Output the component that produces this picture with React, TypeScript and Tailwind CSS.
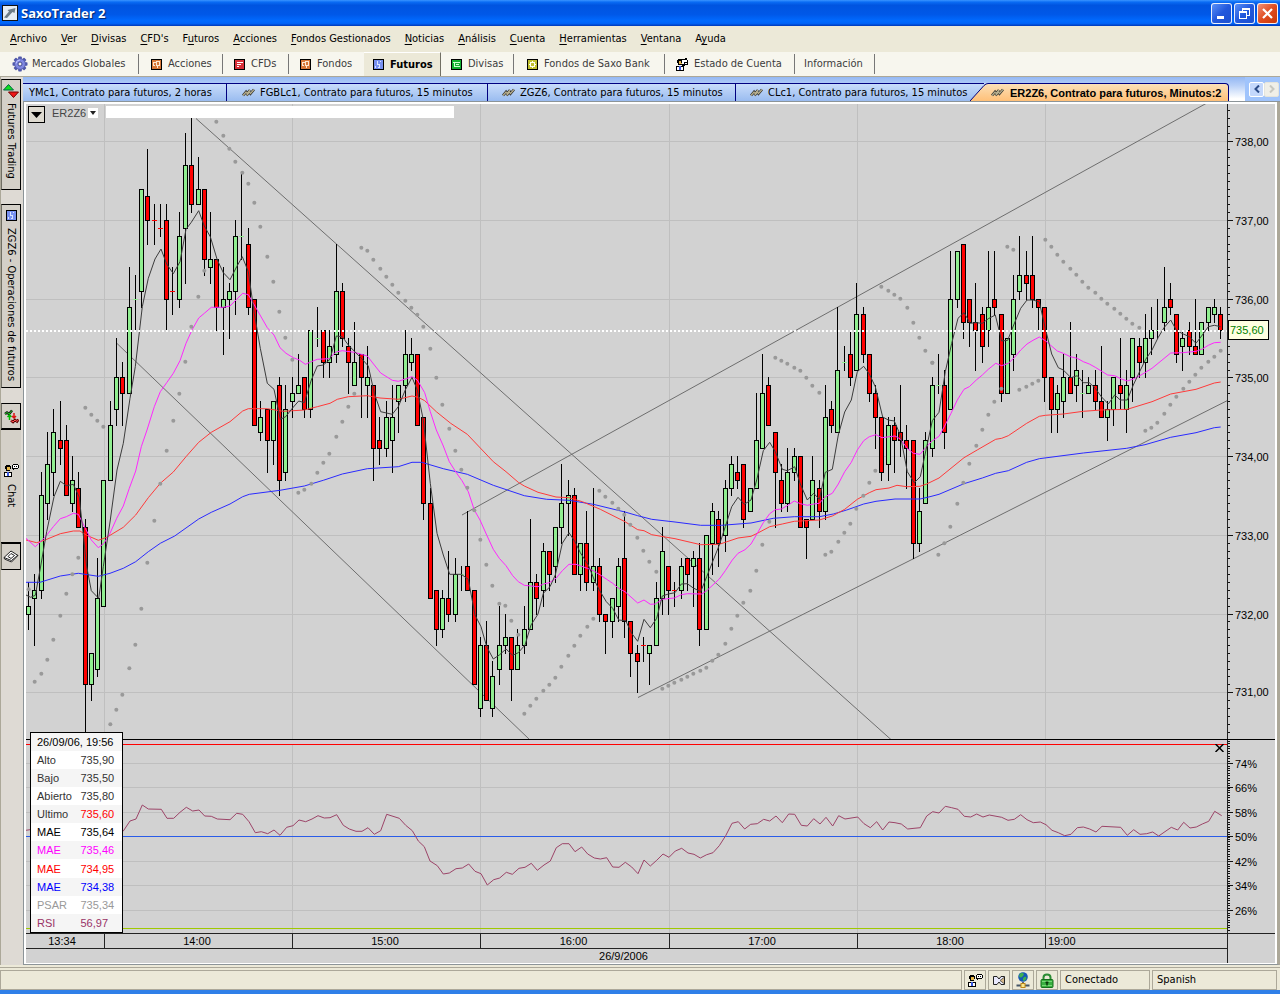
import React from "react";

/* ---------- Market data ---------- */

// high, low, body top, body bottom in ticks of 0.1 above 730.0; g = rising, r = falling
const CANDLES = `24 18 21 20 g|25 16 23 22 g|38 22 35 23 g|43 32 39 34 g|46 35 43 38 g|47 39 42 41 r|44 35 42 35 r|40 33 37 34 g|38 31 36 31 r|32 4 31 11 r
15 9 15 11 g|27 12 22 13 g|37 21 37 21 g|47 37 44 37 g|55 44 50 46 g|52 44 50 48 r|64 48 59 48 g|63 56 60 60 g|74 59 74 61 g|79 67 73 70 r
72 67 70 70 r|72 68 69 69 r|72 56 70 60 r|64 58 61 61 r|71 59 68 60 g|81 62 77 69 g|83 71 77 72 r|78 72 74 72 g|74 63 74 65 r|71 62 65 64 g
65 56 65 59 r|64 53 60 59 g|62 55 61 60 g|70 58 68 61 g|76 65 68 68 g|69 58 67 59 r|60 44 60 44 r|47 42 45 43 g|46 38 46 42 r|47 39 47 42 g
50 35 49 37 r|49 37 46 38 g|50 45 48 47 g|53 48 49 48 g|50 45 50 46 r|56 45 56 46 g|59 54 55 55 g|56 50 56 52 r|56 50 54 52 g|67 52 61 53 g
62 54 61 55 r|55 48 54 52 r|57 49 52 49 g|53 45 53 50 r|54 45 50 49 g|49 37 49 41 r|45 39 42 41 r|47 40 45 41 g|49 38 45 42 g|49 43 49 47 g
56 47 53 49 g|55 51 53 52 g|53 44 53 44 r|45 32 45 34 r|36 22 34 22 r|23 16 23 18 r|23 17 22 18 g|28 19 22 20 r|27 19 25 20 g|26 23 25 25 g
33 23 26 23 r|23 11 23 11 r|17 7 16 8 g|19 9 16 9 r|14 7 12 8 g|21 11 16 13 g|20 15 17 16 g|17 9 17 13 r|18 13 16 13 g|21 15 18 16 g
32 18 24 18 g|25 20 24 22 r|29 21 28 23 g|28 23 28 25 r|31 24 31 26 g|39 29 34 31 g|37 30 35 34 g|36 25 35 25 r|29 23 29 25 g|33 23 29 24 r
36 23 26 24 g|27 19 26 20 r|20 15 20 19 r|22 17 22 19 g|27 19 26 21 g|33 17 27 19 r|19 12 19 15 r|16 10 15 14 r|17 14 16 16 r|16 11 16 15 g
24 16 22 16 g|31 20 28 22 g|26 20 26 23 r|24 21 23 23 r|27 22 26 23 g|27 23 27 25 r|28 21 27 26 g|29 16 27 18 r|30 18 30 18 g|34 25 33 29 g
33 26 32 29 r|37 28 36 30 g|40 35 39 36 g|40 36 38 37 r|39 31 39 32 r|36 33 36 33 g|48 36 42 36 g|53 41 48 41 g|50 44 49 44 r|43 31 43 38 r
39 33 37 34 r|41 33 38 34 g|41 37 40 38 g|40 31 40 31 r|32 27 32 31 r|40 32 37 32 g|37 31 36 33 r|49 32 45 33 g|47 43 46 44 r|59 43 51 43 g
54 51 52 52 g|56 49 53 50 r|62 51 58 51 g|59 52 58 53 r|53 47 53 48 r|49 41 48 45 r|45 37 45 38 r|45 37 44 39 g|45 38 44 42 r|49 40 43 42 r
44 36 42 41 r|42 27 42 29 r|36 28 33 29 g|43 34 42 34 g|50 40 49 41 g|53 48 49 49 g|51 41 49 43 r|66 46 60 46 g|66 59 66 60 g|67 55 67 57 r
60 54 60 57 r|62 51 57 56 r|59 52 58 54 r|66 54 59 56 g|66 58 60 59 r|58 47 58 48 r|55 48 55 48 g|63 51 60 53 g|68 60 63 61 g|66 60 63 62 r
68 59 63 60 r|60 56 60 59 r|59 47 59 50 r|50 43 50 46 r|49 43 48 46 g|53 45 50 47 g|57 48 50 48 r|53 47 51 49 g|51 45 48 48 g|50 48 49 48 g
51 46 49 47 r|54 45 47 45 r|47 42 46 45 g|50 44 50 46 g|55 46 49 48 r|51 43 49 46 g|55 47 55 50 g|55 50 54 52 r|58 50 55 52 g|59 53 56 55 g
60 55 56 56 g|64 56 59 57 g|62 58 60 59 r|58 52 58 53 r|56 51 55 54 g|57 53 56 54 r|60 53 54 53 r|57 53 57 53 g|59 56 59 57 g|60 57 59 58 g
59 55 58 56 r`
  .split(/[|\n]/)
  .map((row) => {
    const [h, l, t, b, c] = row.trim().split(" ");
    return { high: +h, low: +l, top: +t, bottom: +b, up: c === "g" };
  });

// Recorded curves: each tile has an origin, and its points are in thirds of a unit from it.
type Tile = [number, number, string];
const toPoints = (tiles: Tile[]): [number, number][] =>
  tiles.flatMap(([ox, oy, pts]) =>
    pts.split(" ").map((p) => {
      const [x, y] = p.split(",").map(Number);
      return [ox + x / 3, oy + y / 3] as [number, number];
    })
  );
const toLine = (tiles: Tile[]) =>
  toPoints(tiles)
    .map(([x, y]) => `${x.toFixed(1)},${y.toFixed(1)}`)
    .join(" ");

const FAST = toLine([
  [20, 400, "18,585 32,592 46,586 60,510 80,395 102,290 121,244 139,257 160,253 178,292 200,500 214,572 236,595 250,500 271,360 291,210 310,130"],
  [20, 100, "330,895 346,800 367,620 385,535 405,477 423,447 440,492 460,521 480,485 498,388 514,367 536,332 553,378 571,410 592,480 610,518 630,539 650,500 667,470 685,515 703,640 721,745 742,850 762,868 781,958 797,950 817,925 836,903 853,908 874,840 892,798 910,795 930,778 949,708"],
  [330, 230, "37,320 55,345 94,385 115,408 133,490 152,545 187,553 205,530 226,480 246,442 262,480 280,570 301,760 321,910 340,975 359,1033 394,1033 415,1048 435,1155 453,1190 470,1250 490,1287 508,1275 528,1257 548,1276 565,1268 585,1245 603,1185 624,1152 640,1090 660,1070 676,1035 697,940 717,908 735,935 751,968 775,1005 793,1050 808,1080 829,1115 848,1135 866,1170 887,1172 905,1210 923,1234 942,1168"],
  [640, 280, "31,1043 50,1015 67,948 85,942 105,938 124,912 142,911 160,924 182,935 200,890 220,840 238,795 256,740 275,680 294,652 313,673 333,660 350,600 370,512 389,487 406,515 427,568 442,572 464,560 481,612 502,660 521,640 538,658 556,577 577,568 595,465 614,396 634,360 652,275 671,259 688,282 706,320 728,411 745,420 763,423 781,465 802,575 823,608 841,590 858,510 877,422 897,397"],
  [900, 200, "136,515 155,430 174,355 192,338 211,370 228,368 247,370 265,356 286,345 305,423 323,421 341,375 362,325 381,300 399,300 418,306 436,385 455,462 475,503 490,510 513,533 532,527 550,548 568,548 586,565 604,590 625,612 644,585 661,600 682,600 700,555 718,517 737,478 756,450 775,412 793,382 812,360 830,392 850,402 868,410 888,430 907,405 925,380 943,376 962,380"],
]);

const MEDIUM = toLine([
  [20, 400, "18,415 46,440 75,412 100,380 121,356 139,350 160,340 175,343 196,385 214,420 235,443 252,430 270,400 290,355 310,318 328,265 347,213 364,140 381,90"],
  [20, 100, "403,920 421,875 440,848 460,820 480,782 498,730 516,690 536,654 553,640 574,622 610,622 630,618 650,598 668,580 685,584 703,615 742,683 762,705 780,743 798,760 820,773 838,780 856,793 874,785 892,778 928,776 945,758"],
  [330, 230, "19,366 37,362 73,367 112,378 133,405 152,429 187,451 205,454 226,447 246,440 262,450 284,488 301,545 319,600 340,648 358,695 379,728 396,752 415,785 433,840 450,870 470,915 490,958 508,985 528,1007 548,1037 565,1055 583,1066 624,1070 640,1062 658,1058 678,1045 697,1022 717,1003 738,1003 772,1015 790,1022 811,1035 848,1060 866,1075 885,1085 923,1119 942,1110"],
  [640, 280, "31,973 46,972 67,958 103,954 124,944 142,941 185,942 200,932 238,897 256,872 277,840 294,820 315,809 333,792 352,760 370,728 389,701 406,689 424,687 445,675 463,663 481,671 502,676 521,672 538,670 556,650 577,640 595,612 614,575 634,547 652,510 671,482 688,470 708,464 726,473 765,468 781,477 802,505 820,520 840,523 858,502 877,482 897,469"],
  [900, 200, "133,680 153,640 172,600 192,568 208,560 229,540 247,525 265,508 287,490 305,497 325,490 343,473 362,450 381,432 399,421 418,411 436,422 472,453 490,460 511,470 532,475 550,485 568,492 586,502 623,525 644,527 664,537 682,543 700,537 718,528 738,516 756,505 812,459 848,458 888,454 907,447 925,436 943,428 962,427"],
]);

const SLOW = toLine([
  [20, 400, "18,420 50,428 75,420 121,401 160,393 180,393 200,406 235,421 260,412 310,382 347,345 385,293 421,250 460,216 498,170 536,127 574,97 630,65 668,33 685,26 742,26 790,34 853,30 892,20 930,10"],
  [330, 230, "22,508 55,500 112,497 150,504 205,508 246,498 265,502 284,512 319,545 362,580 412,613 490,695 528,725 565,757 583,768 624,787 678,801 717,803 757,815 811,838 885,875 923,899 942,902"],
  [640, 280, "35,764 105,776 182,794 238,793 294,774 333,769 352,760 389,740 427,732 463,724 538,720 577,708 614,688 652,658 688,638 708,629 747,624 771,616 800,620 840,619 860,612"],
  [900, 200, "117,834 192,773 233,749 287,718 305,715 325,707 380,670 418,649 436,646 490,642 550,634 604,630 682,628 756,605 812,582 888,568 943,549 962,546"],
]);

const LONG = toLine([
  [20, 400, "18,547 60,547 121,528 175,520 235,529 270,520 310,505 347,485 385,455 421,430 464,408 536,357 574,337 630,312 668,290 688,283 780,271 853,258 910,241"],
  [330, 230, "37,732 112,716 205,710 246,697 275,697 340,716 412,733 490,766 583,797 650,808 717,811 790,823 885,846 923,857"],
  [640, 280, "35,718 105,726 182,736 245,736 333,729 400,715 463,710 538,710 580,702 620,690 671,672 708,664 765,657 840,657 870,650"],
  [900, 200, "117,883 192,851 247,834 287,820 325,812 380,787 418,776 550,759 680,745 735,734 812,712 888,698 943,683 962,681"],
]);

const SAR = toPoints([
  [20, 400, "26,568 44,845 64,821 82,779 100,719 121,647 139,581 157,523 175,473 271,973 289,929 307,884 328,805 346,734 364,626 382,488 403,362 421,251 440,152 460,62 835,278 853,269 874,251 892,218 910,188 928,161 949,110"],
  [20, 100, "196,923 214,944 232,962 250,980 478,881 496,785 514,680 535,590 553,512 589,65 610,107 628,146 646,185 667,218 685,251 703,308 721,380 742,470 760,545 778,635 796,713 817,779"],
  [330, 230, "37,575 55,530 73,491 94,53 112,62 130,89 151,116 169,140 187,164 205,188 226,212 244,233 262,254 280,290 301,356 319,443 337,524 358,596 376,662 394,719 412,773 433,841 451,929 469,1004 487,1067 508,1121 526,1127 544,1172 565,1214 583,1451 601,1427 619,1406 640,1382 658,1364 676,1343 694,1310 715,1277 733,1247 751,1217 772,1190 790,1166 808,782 826,800 847,818 865,836 883,854 901,884 922,923"],
  [640, 280, "10,812 28,845 49,875 67,1226 85,1217 103,1208 124,1199 142,1190 160,1181 181,1172 199,1163 217,1142 235,1124 256,1091 274,1046 292,1007 310,968 331,932 349,872 367,794 388,725 406,233 424,242 442,251 463,263 481,272 499,293 517,317 538,338 556,824 574,815 595,785 613,758 631,731 649,686 670,647 688,608 706,572 724,20 745,32 763,44 781,56 802,83 820,128 838,173 856,212 877,248 895,824"],
  [900, 200, "97,488 133,1030 151,980 172,911 190,848 208,791 229,737 247,689 265,644 283,605 304,566 322,140 340,149 358,569 379,560 397,551 415,542 436,119 454,140 472,164 490,185 511,206 529,224 547,245 565,263 586,278 604,296 622,311 643,326 661,341 679,356 697,371 718,383 736,692 754,683 772,668 793,641 811,614 829,590 850,566 868,545 886,524 904,503 925,485 943,470 962,452"],
]);

const RSI = toLine([
  [0, 725, "78,316 90,314 370,318 390,288 408,282 427,240 445,252 484,253 501,280 521,280 540,262 559,247 578,258 597,255 614,273 634,274 652,282 690,284 710,265 728,268 747,290 766,323 784,320 803,326 822,315 840,331 860,307 879,302 897,285 917,290 936,282 954,272 973,279 990,278 1010,269 1030,301 1048,312 1068,319 1086,319 1104,308 1123,328 1142,317 1160,268 1198,280 1217,301 1237,317 1255,348 1273,365 1290,408"],
  [430, 725, "22,422 40,447 58,444 78,431 97,429 116,417 135,439 153,446 172,480 191,464 209,459 229,442 247,448 267,430 285,427 304,415 322,436 342,420 361,408 379,368 397,356 417,356 435,380 455,366 473,387 493,399 511,402 530,398 548,426 567,427 586,412 605,426 624,446 642,405 661,423 680,406 699,387 717,397 736,378 755,370 774,384 792,388 811,399 830,389 849,383 868,362 887,332 906,295 925,290 944,312 962,298 982,296 1001,283 1019,288 1038,273 1057,293 1076,267 1094,268 1114,301 1132,303 1151,281 1170,297 1188,277 1208,303 1226,272 1245,282 1283,276"],
  [860, 725, "12,296 31,308 50,290 68,315 87,291 105,293 124,297 143,312 162,310 181,308 200,273 218,260 237,264 256,244 275,248 294,253 313,274 332,276 350,267 369,276 388,270 425,277 444,286 463,283 482,269 501,284 520,293 541,291 558,299 576,316 595,323 614,332 633,328 652,308 670,306 689,312 708,321 726,304 782,307 802,331 821,314 840,328 860,326 878,321 896,333 934,307 953,315 971,292 990,309 1009,306 1027,297 1046,289 1064,259 1085,272"],
]);

const HOURS = [104, 292, 480, 669, 857, 1045];
const candleX = (i: number) => 28 + Math.floor(i * 6.273 + 0.7);
const priceY = (ticks: number) => Math.round(141.3 + (80 - ticks) * 7.87);
const rsiY = (pct: number) => Math.round(836.3 + (50 - pct) * 3.06);

/* ---------- Chart ---------- */

function PricePane() {
  return (
    <svg
      className="absolute inset-0 h-full w-full"
      viewBox="26 104 1201 635"
      preserveAspectRatio="none"
      role="img"
      aria-label="ER2Z6"
    >
      <g fill="#bfbfbf" shapeRendering="crispEdges">
        {[80, 70, 60, 50, 40, 30, 20, 10].map((t) => (
          <rect key={t} x="26" y={priceY(t)} width="1201" height="1" />
        ))}
        {HOURS.map((x) => (
          <rect key={x} x={x} y="104" width="1" height="635" />
        ))}
      </g>
      <g stroke="#6e6e6e" strokeWidth="1">
        <path d="M196 118.5L891.5 740M116 342.5L530 740M462 515L1206 103.500M638 697.500L1227.500 400.500" />
      </g>
      <g shapeRendering="crispEdges">
        {CANDLES.map((c, i) => {
          const x = candleX(i);
          const y = priceY(c.top);
          const h = priceY(c.bottom) - y + 1;
          return (
            <g key={i}>
              <rect x={x} y={priceY(c.high)} width="1" height={priceY(c.low) - priceY(c.high) + 1} fill="#000" />
              {h === 1 ? (
                <rect x={x - 2} y={y} width="5" height="1" fill={c.up ? "#8fee8f" : "#f00"} />
              ) : (
                <>
                  <rect x={x - 2} y={y} width="5" height={h} fill="#000" />
                  <rect x={x - 1} y={y + 1} width="3" height={h - 2} fill={c.up ? "#90ee90" : "#f00"} />
                </>
              )}
            </g>
          );
        })}
      </g>
      <g fill="none" strokeWidth="1">
        <polyline points={LONG} stroke="#2a2aff" />
        <polyline points={SLOW} stroke="#ff3a3a" />
        <polyline points={MEDIUM} stroke="#ff28ff" />
        <polyline points={FAST} stroke="#3c3c3c" />
      </g>
      <g fill="#999">
        {SAR.map(([x, y], i) => (
          <circle key={i} cx={x} cy={y} r="2" />
        ))}
      </g>
      <path d="M26 331H1227" stroke="#fff" strokeWidth="2" strokeDasharray="2 2" shapeRendering="crispEdges" />
    </svg>
  );
}

function RsiPane() {
  return (
    <svg
      className="absolute inset-0 h-full w-full"
      viewBox="26 740 1201 193"
      preserveAspectRatio="none"
      role="img"
      aria-label="RSI"
    >
      <g shapeRendering="crispEdges">
        <g fill="#bfbfbf">
          {[74, 66, 58, 42, 34, 26].map((p) => (
            <rect key={p} x="26" y={rsiY(p)} width="1201" height="1" />
          ))}
          {HOURS.map((x) => (
            <rect key={x} x={x} y="740" width="1" height="193" />
          ))}
        </g>
        <rect x="26" y="740" width="1201" height="4" fill="#d8ccd4" />
        <rect x="26" y="744" width="1201" height="1" fill="#f00" />
        <rect x="26" y="836" width="1201" height="1" fill="#2a5ce8" />
        <rect x="26" y="928" width="1201" height="1" fill="#9fc800" />
      </g>
      <polyline points={RSI} fill="none" stroke="#9c4468" strokeWidth="1" />
    </svg>
  );
}

type AxisLabel = { y: number; text: string };

function Axis({ top, height, labels, ticks }: { top: number; height: number; labels: AxisLabel[]; ticks: number[] }) {
  return (
    <div className="relative w-12 shrink-0 border-l border-[#222]">
      <svg
        className="absolute inset-y-0 left-0 h-full w-[6px]"
        viewBox={`0 ${top} 6 ${height}`}
        preserveAspectRatio="none"
        shapeRendering="crispEdges"
        fill="#111"
        aria-hidden="true"
      >
        {ticks.map((y) => (
          <rect key={y} x="0" y={y} width="2" height="1" />
        ))}
        {labels.map((l) => (
          <rect key={l.y} x="0" y={l.y} width="5" height="1" />
        ))}
      </svg>
      {labels.map((l) => (
        <span
          key={l.text}
          className="absolute left-[7px] -translate-y-1/2 leading-3 text-black"
          style={{ top: `${((l.y + 0.5 - top) / height) * 100}%` }}
        >
          {l.text}
        </span>
      ))}
    </div>
  );
}

const PRICE_LABELS = [80, 70, 60, 50, 40, 30, 20, 10].map((t) => ({ y: priceY(t), text: `${730 + t / 10},00` }));
const PRICE_TICKS = Array.from({ length: 80 }, (_, i) => priceY(84 - i)).filter((y) => y > 104 && y < 739);
const RSI_LABELS = [74, 66, 58, 50, 42, 34, 26].map((p) => ({ y: rsiY(p), text: `${p}%` }));
const RSI_TICKS = Array.from({ length: 78 }, (_, i) => Math.round(763 - 22 + i * 2.45)).filter((y) => y < 933);

const READOUT: [string, string, string, string][] = [
  ["Alto", "735,90", "text-[#333]", "text-[#333]"],
  ["Bajo", "735,50", "text-[#333]", "text-[#333]"],
  ["Abierto", "735,80", "text-[#333]", "text-[#333]"],
  ["Ultimo", "735,60", "text-[#333]", "text-[#f00]"],
  ["MAE", "735,64", "text-black", "text-black"],
  ["MAE", "735,46", "text-[#f0f]", "text-[#f0f]"],
  ["MAE", "734,95", "text-[#f00]", "text-[#f00]"],
  ["MAE", "734,38", "text-[#00f]", "text-[#00f]"],
  ["PSAR", "735,34", "text-[#999]", "text-[#999]"],
  ["RSI", "56,97", "text-[#993366]", "text-[#993366]"],
];

function Readout() {
  return (
    <table className="absolute bottom-0 left-1 h-[201px] w-[93px] border-collapse border border-black bg-white leading-3">
      <tbody>
        <tr className="bg-[#f5f5f5]">
          <th colSpan={2} className="p-0 pl-[6px] text-left font-normal whitespace-nowrap text-black">
            26/09/06, 19:56
          </th>
        </tr>
        {READOUT.map(([name, value, nameColor, valueColor], i) => (
          <tr key={i} className={i % 2 ? "bg-[#f5f5f5]" : "bg-white"}>
            <th scope="row" className={`w-[50px] p-0 pl-[6px] text-left font-normal ${nameColor}`}>
              {name}
            </th>
            <td className={`p-0 ${valueColor}`}>{value}</td>
          </tr>
        ))}
      </tbody>
    </table>
  );
}

const TIME_CELLS = ["13:34", "14:00", "15:00", "16:00", "17:00", "18:00", "19:00"];

function Chart() {
  return (
    <section className="flex min-h-0 flex-1 flex-col border-2 border-b border-white bg-[#d2d2d2] font-['Liberation_Sans',Arial,sans-serif] text-[11px]">
      <div className="flex min-h-0 flex-[635] border-b border-black">
        <div className="relative min-w-0 flex-1">
          <PricePane />
          <div className="absolute top-[2px] left-[2px] flex items-start">
            <button
              aria-label="Menú del gráfico"
              className="flex h-[17px] w-[17px] items-center justify-center border border-black bg-[#dedad0]"
            >
              <svg width="11" height="6" viewBox="0 0 11 6" aria-hidden="true">
                <path d="M0 0H11L5.500 6Z" />
              </svg>
            </button>
            <span className="ml-[7px] w-9 leading-[14px] text-[#444]">ER2Z6</span>
            <button aria-label="Símbolo" className="mt-[2px] flex h-[10px] w-[10px] items-center justify-center bg-white">
              <svg width="6" height="4" viewBox="0 0 6 4" aria-hidden="true">
                <path d="M0 0H6L3 4Z" fill="#222" />
              </svg>
            </button>
            <div className="ml-2 h-3 w-[348px] bg-white" />
          </div>
        </div>
        <div className="relative flex">
          <Axis top={104} height={635} labels={PRICE_LABELS} ticks={PRICE_TICKS} />
          <span className="absolute top-[35.6%] left-px flex h-5 w-[41px] -translate-y-1/2 items-center border border-black bg-[#ffffe1] pl-px text-[#008000]">
            735,60
          </span>
        </div>
      </div>
      <div className="flex min-h-0 flex-[193] border-b border-[#222]">
        <div className="relative min-w-0 flex-1">
          <RsiPane />
          <Readout />
          <button aria-label="Cerrar RSI" className="absolute top-1 right-[3px]">
            <svg width="9" height="8" viewBox="0 0 9 8" stroke="#000" strokeWidth="1.500" aria-hidden="true">
              <path d="M0.500 0L8.500 8M8.500 0L0.500 8" />
            </svg>
          </button>
        </div>
        <Axis top={740} height={193} labels={RSI_LABELS} ticks={RSI_TICKS} />
      </div>
      <div className="flex h-[29px] shrink-0 text-center text-black">
        <div className="min-w-0 flex-1">
          <div className="grid h-[15px] grid-cols-[78fr_188fr_188fr_189fr_188fr_188fr_182fr] border-b border-[#222] leading-[15px]">
            {TIME_CELLS.map((label, i) => (
              <div
                key={label}
                className={
                  i === 0
                    ? "pr-[6px]"
                    : i === TIME_CELLS.length - 1
                      ? "border-l border-[#222] pl-[2px] text-left"
                      : "border-l border-[#222] pr-[3px]"
                }
              >
                {label}
              </div>
            ))}
          </div>
          <div className="pr-[6px] leading-[14px]">26/9/2006</div>
        </div>
        <div className="w-12 shrink-0 border-l border-[#222]" />
      </div>
    </section>
  );
}

/* ---------- Icons ---------- */

const pixel = { shapeRendering: "crispEdges" as const, "aria-hidden": true };

function GearIcon() {
  return (
    <svg width="16" height="16" viewBox="0 0 16 16" aria-hidden="true">
      <g fill="#5058a8">
        {[0, 45, 90, 135, 180, 225, 270, 315].map((a) => (
          <rect key={a} x="6.200" y="0.500" width="3.600" height="4" rx="0.800" transform={`rotate(${a} 8 8)`} />
        ))}
      </g>
      <circle cx="8" cy="8" r="5.400" fill="#8088e0" stroke="#5058a8" strokeWidth="0.800" />
      <path d="M4 7.500A4 4 0 0 1 8 4" fill="none" stroke="#c0c4ff" />
      <circle cx="8" cy="8" r="2" fill="#f7f6ee" stroke="#404890" />
    </svg>
  );
}

function TileIcon({ fill, path, stroke = "#fff" }: { fill: string; path: string; stroke?: string }) {
  return (
    <svg width="11" height="11" viewBox="0 0 11 11" {...pixel}>
      <rect width="11" height="11" fill="#000" />
      <rect x="1" y="1" width="9" height="9" fill={fill} />
      <path d={path} fill="none" stroke={stroke} />
    </svg>
  );
}
const StocksIcon = () => <TileIcon fill="#d87838" stroke="#ffe8d0" path="M2 3.500H5.500V7M2.500 3V6.500H4M5 2.500H8.500V6.500H6V9" />;
const CfdIcon = () => <TileIcon fill="#d83038" path="M3 3.500H9M3 5.500H7M3 7.500H5" />;
const FuturesIcon = () => <TileIcon fill="#7890f0" stroke="#d8e4ff" path="M4.500 2V5.500H7M6.500 5V8.500H5M2.500 7V9M7.500 2V3" />;
const ForexIcon = () => <TileIcon fill="#10b030" stroke="#d0ffd0" path="M2 3.500H9M3.500 3V7.500H9M5 5.500H8" />;
const FundIcon = () => <TileIcon fill="#c0c030" stroke="#fffff0" path="M3.500 4V3.500H7.500V7.500H3.500V4M5.500 2V4M5.500 7V9M2 5.500H4M7 5.500H9" />;

function PersonIcon({ doc = false }: { doc?: boolean }) {
  return (
    <svg width={doc ? 12 : 15} height="13" viewBox={doc ? "0 0 12 13" : "0 0 15 13"} {...pixel}>
      <path d="M2 1H6V2H7V5H6V7H2V5H1V2H2Z" fill="#000" />
      <path d="M3 3H6V6H3Z" fill="#e8b848" />
      <path d="M0 8H8V13H0Z" fill="#000" />
      <path d="M1 9H3V12H1ZM5 9H7V12H5Z" fill="#fff" />
      <path d="M3 8H5V12H3Z" fill="#3858e0" />
      {doc ? (
        <>
          <path d="M5 1H9V0H11V2H12V7H9V8H6V6H7V5H5Z" fill="#000" />
          <path d="M6 2H11V4H8V6H6ZM9 5H11V6H9Z" fill="#fff" />
        </>
      ) : (
        <>
          <path d="M9 0H14V1H15V4H14V5H10V6H9V5H8V1H9Z" fill="#000" />
          <path d="M9 1H14V4H9Z" fill="#fff" />
          <path d="M10 2H11V3H10ZM12 2H13V3H12Z" fill="#000" />
        </>
      )}
    </svg>
  );
}

function ChartTabIcon() {
  return (
    <svg width="13" height="9" viewBox="0 0 13 9" aria-hidden="true">
      <path d="M1 7.500L4 4L5 5.500L8 2M4.500 7.500L7.500 4L8.500 5.500L12 1.500" fill="none" stroke="#2c2c28" strokeWidth="2.600" />
      <path d="M1 7.500L4 4L5 5.500L8 2M4.500 7.500L7.500 4L8.500 5.500L12 1.500" fill="none" stroke="#b8b090" strokeWidth="1.200" />
    </svg>
  );
}

function UpDownIcon() {
  return (
    <svg width="16" height="16" viewBox="0 0 16 16" aria-hidden="true">
      <path d="M0.500 7L5.500 1.500L10.500 7Z" fill="#10e020" stroke="#064" />
      <path d="M5.500 9L10.500 14.500L15.500 9Z" fill="#f01818" stroke="#700" />
    </svg>
  );
}

function TradesIcon() {
  return (
    <svg width="15" height="15" viewBox="0 0 15 15" fill="none" aria-hidden="true">
      <path d="M1 5L3 3.500L5 5L8 1.500" stroke="#111" strokeWidth="2.500" />
      <path d="M1 5L3 3.500L5 5L8 1.500" stroke="#2c2" />
      <path d="M5.500 11V6M3.500 8L5.500 6L7.500 8" stroke="#0b0" strokeWidth="1.500" />
      <path d="M10 4V9M8 7L10 9L12 7" stroke="#d11" strokeWidth="1.500" />
      <path d="M7 11.500L9 13L11 11L13 12.500L14.500 10.500" stroke="#500" strokeWidth="2.500" />
      <path d="M7 11.500L9 13L11 11L13 12.500L14.500 10.500" stroke="#f55" />
    </svg>
  );
}

function NewsIcon() {
  return (
    <svg width="16" height="13" viewBox="0 0 16 13" aria-hidden="true">
      <path d="M1 7.500L8 1L15 5.500L8.500 12L1.500 9Z" fill="#fff" stroke="#222" />
      <path d="M1 7.500L8.500 10.500L15 5M5 6.500L8 3.500L11.500 5.500L8 8.500Z" fill="none" stroke="#222" />
    </svg>
  );
}

function MailIcon() {
  return (
    <svg width="12" height="9" viewBox="0 0 12 9" aria-hidden="true">
      <path d="M0.500 0.500H4L6 3L8 0.500H11.500V8.500H8L6 6L4 8.500H0.500Z" fill="#e8e8fc" stroke="#222" />
      <path d="M7.500 4.500L11 1.500V7.500Z" fill="#d8b888" />
      <path d="M7 4.500L11 1.500M7 4.500L11 7.500" stroke="#443" strokeWidth="0.800" />
    </svg>
  );
}

function GlobeIcon() {
  return (
    <svg width="14" height="16" viewBox="0 0 14 16" aria-hidden="true">
      <circle cx="7" cy="5" r="4.800" fill="#1458b8" />
      <path d="M4 1.500C7 0 9 2 7 4S4 6 3 4ZM8 5C11 4 11 7 9 8.500S6 7 8 5Z" fill="#40b050" />
      <path d="M7 10V12" stroke="#666" strokeWidth="2" />
      <path d="M0.500 13.500H13.500" stroke="#456" strokeWidth="2" />
      <rect x="5" y="11.500" width="4" height="4" fill="#f8e890" stroke="#c08818" />
    </svg>
  );
}

function LockIcon() {
  return (
    <svg width="14" height="15" viewBox="0 0 14 15" aria-hidden="true">
      <path d="M3.500 7V4.500C3.500 0.500 10.500 0.500 10.500 4.500V7" fill="none" stroke="#2c8c34" strokeWidth="2" />
      <rect x="1" y="6.500" width="12" height="8" rx="1" fill="#38b040" stroke="#14701c" />
      <path d="M2 8.500H12M2 12.500H12" stroke="#78d878" />
      <path d="M7 8.500V12.500M5.500 9.500H8.500" stroke="#053808" strokeWidth="1.500" />
    </svg>
  );
}

/* ---------- Window furniture ---------- */

function TitleBar() {
  const base = "flex h-[21px] w-[21px] items-center justify-center rounded-[3px] border border-white/90";
  return (
    <header className="flex h-[26px] shrink-0 items-center bg-[linear-gradient(to_bottom,#3a94ff_0%,#0a6cf4_8%,#0054e0_20%,#0058e8_55%,#006aff_80%,#0064f8_90%,#0038b8_100%)] pr-[2px] pl-[2px]">
      <svg width="16" height="16" viewBox="0 0 16 16" aria-hidden="true">
        <rect x="0.500" y="0.500" width="15" height="15" fill="#e4ecf4" stroke="#111" />
        <path d="M2 12.500L7 6.500L5.500 5L13.500 3L12.500 8L10.500 7L5 13Z" fill="#6c7c88" />
      </svg>
      <h1 className="ml-[3px] flex-1 font-['Open_Sans',sans-serif] text-[13px] font-bold text-white [text-shadow:1px_1px_1px_#00246c]">
        SaxoTrader 2
      </h1>
      <div className="flex gap-[2px]">
        <button aria-label="Minimizar" className={`${base} bg-[linear-gradient(135deg,#5a90f8,#2258dc_50%,#1c50d0)]`}>
          <svg width="13" height="13" {...pixel}>
            <rect x="2" y="9" width="7" height="3" fill="#fff" />
          </svg>
        </button>
        <button aria-label="Restaurar" className={`${base} bg-[linear-gradient(135deg,#5a90f8,#2258dc_50%,#1c50d0)]`}>
          <svg width="13" height="13" fill="none" stroke="#fff" {...pixel}>
            <path d="M4 2H11M4 1.500H11.500V8.500H9M4.500 1V4M1.500 5V11.500H8.500V4.500H1M1 5.500H9" />
          </svg>
        </button>
        <button aria-label="Cerrar" className={`${base} bg-[linear-gradient(135deg,#f09078,#e04c20_50%,#c83808)]`}>
          <svg width="13" height="13" stroke="#fff" strokeWidth="2.200" aria-hidden="true">
            <path d="M2 2L11 11M11 2L2 11" />
          </svg>
        </button>
      </div>
    </header>
  );
}

// [before, access key, after]
const MENU: [string, string, string][] = [
  ["", "A", "rchivo"],
  ["", "V", "er"],
  ["", "D", "ivisas"],
  ["", "C", "FD's"],
  ["F", "u", "turos"],
  ["", "A", "cciones"],
  ["", "F", "ondos Gestionados"],
  ["", "N", "oticias"],
  ["", "A", "nálisis"],
  ["", "C", "uenta"],
  ["", "H", "erramientas"],
  ["", "V", "entana"],
  ["A", "y", "uda"],
];

function MenuBar() {
  return (
    <nav className="flex h-[26px] shrink-0 items-center bg-[#ece9d8] pl-[3px]">
      {MENU.map(([pre, key, post]) => (
        <button key={pre + key + post} className="px-[7px] whitespace-nowrap">
          {pre}
          <u className="underline-offset-2">{key}</u>
          {post}
        </button>
      ))}
    </nav>
  );
}

const TOOLS: { label: string; icon?: React.ReactNode; width: string; active?: boolean; bar?: boolean }[] = [
  { label: "Mercados Globales", icon: <GearIcon />, width: "w-[139px] gap-1 pl-3", bar: true },
  { label: "Acciones", icon: <StocksIcon />, width: "w-[84px] gap-[6px] pl-3", bar: true },
  { label: "CFDs", icon: <CfdIcon />, width: "w-[66px] gap-[6px] pl-[11px]", bar: true },
  { label: "Fondos", icon: <StocksIcon />, width: "w-[75px] gap-[6px] pl-[11px]" },
  { label: "Futuros", icon: <FuturesIcon />, width: "w-[77px] gap-[6px] pl-[9px]", active: true },
  { label: "Divisas", icon: <ForexIcon />, width: "w-[73px] gap-[6px] pl-[10px]", bar: true },
  { label: "Fondos de Saxo Bank", icon: <FundIcon />, width: "w-[151px] gap-[6px] pl-[13px]", bar: true },
  { label: "Estado de Cuenta", icon: <PersonIcon doc />, width: "w-[130px] gap-[6px] pl-[11px]", bar: true },
  { label: "Información", width: "w-[80px] pl-[9px]", bar: true },
];

function ToolBar() {
  return (
    <div className="flex h-6 shrink-0 bg-[#f7f6ee]">
      {TOOLS.map((t) => (
        <button
          key={t.label}
          className={`relative flex items-center whitespace-nowrap ${t.width} ${
            t.active
              ? "border-t border-r border-t-white border-r-[#716f64] bg-[#ece9d8] font-bold text-black"
              : "text-[#3c3c3c]"
          }`}
        >
          {t.icon}
          {t.label}
          {t.bar && <i className="absolute top-[2px] right-0 h-5 w-px bg-[#777]" />}
        </button>
      ))}
    </div>
  );
}

function SideBar() {
  const tab = "flex w-5 items-center border border-black border-l-[#716f64] bg-[#d4d0c8] [writing-mode:vertical-rl]";
  return (
    <aside className="flex w-[23px] shrink-0 flex-col border-l border-[#aca899] bg-[#dedad4] pt-[2px]">
      <button className={`${tab} h-[111px] gap-1 pt-[3px]`}>
        <UpDownIcon />
        Futures Trading
      </button>
      <button className={`${tab} mt-[14px] h-[184px] gap-[7px] pt-[5px]`}>
        <FuturesIcon />
        ZGZ6 - Operaciones de futuros
      </button>
      <button aria-label="Operaciones" className={`${tab} mt-[15px] h-[26px] justify-center`}>
        <TradesIcon />
      </button>
      <button className={`${tab} h-[114px] gap-[7px] border-y-0 pt-[34px]`}>
        <PersonIcon />
        Chat
      </button>
      <button aria-label="Noticias" className={`${tab} h-[27px] justify-center`}>
        <NewsIcon />
      </button>
    </aside>
  );
}

function DocumentTabs() {
  const tab =
    "relative flex h-[18px] shrink-0 items-center whitespace-nowrap border-t border-r border-[#000080] bg-[linear-gradient(to_bottom,#c8dcfa,#9abcf0)]";
  return (
    <div className="flex h-[25px] shrink-0 items-end overflow-hidden border-b border-[#8c9498] bg-[linear-gradient(to_bottom,#94b8f4_0%,#b8d0f8_35%,#ffffff_90%)]">
      <button className={`${tab} w-[204px] pl-[6px]`}>YMc1, Contrato para futuros, 2 horas</button>
      <button className={`${tab} w-[261px] gap-[5px] pl-[15px]`}>
        <ChartTabIcon />
        FGBLc1, Contrato para futuros, 15 minutos
      </button>
      <button className={`${tab} w-[248px] gap-[5px] pl-[14px]`}>
        <ChartTabIcon />
        ZGZ6, Contrato para futuros, 15 minutos
      </button>
      <button className={`${tab} w-[234px] gap-[5px] border-r-0 pl-[14px]`}>
        <ChartTabIcon />
        CLc1, Contrato para futuros, 15 minutos
      </button>
      <div className="flex shrink-0 items-end">
        <svg width="18" height="18" viewBox="0 0 18 18" aria-hidden="true">
          <defs>
            <linearGradient id="idle" x2="0" y2="1">
              <stop stopColor="#c8dcfa" />
              <stop offset="1" stopColor="#9abcf0" />
            </linearGradient>
            <linearGradient id="active" x2="0" y2="1">
              <stop stopColor="#fbe0b8" />
              <stop offset="1" stopColor="#ffc078" />
            </linearGradient>
          </defs>
          <path d="M0 0H18V18H0Z" fill="url(#idle)" />
          <path d="M0 0.500H14" stroke="#000080" />
          <path d="M0 18L14 2.500Q16 0.500 18 0.500V18Z" fill="url(#active)" />
          <path d="M0 18L14 2.500Q16 0.500 18 0.500" fill="none" stroke="#000080" />
        </svg>
        <button className="flex h-[18px] w-[241px] items-center gap-[6px] rounded-tr-sm border-t border-r border-[#000080] bg-[linear-gradient(to_bottom,#fbe0b8,#ffc078)] pl-[3px] font-['Liberation_Sans',Arial,sans-serif] font-bold whitespace-nowrap">
          <ChartTabIcon />
          ER2Z6, Contrato para futuros, Minutos:2
        </button>
      </div>
      <div className="flex-1" />
      <div className="flex h-full w-[35px] shrink-0 items-center bg-[#a0c4fc] pl-1">
        <button
          aria-label="Pestaña anterior"
          className="flex h-[15px] w-[15px] items-center justify-center rounded-[2px] border border-white bg-[#c4d8fc]"
        >
          <svg width="6" height="8" fill="none" stroke="#2c4c88" strokeWidth="2" aria-hidden="true">
            <path d="M5 0.500L1.500 4L5 7.500" />
          </svg>
        </button>
        <button
          aria-label="Pestaña siguiente"
          disabled
          className="flex h-[15px] w-[15px] items-center justify-center rounded-[2px] border border-[#e4e4dc] bg-[#f0efe8]"
        >
          <svg width="6" height="8" fill="none" stroke="#c8c8c0" strokeWidth="2" aria-hidden="true">
            <path d="M1 0.500L4.500 4L1 7.500" />
          </svg>
        </button>
      </div>
    </div>
  );
}

function StatusBar() {
  const cell = "flex h-5 items-center border border-[#aca899]";
  return (
    <footer className="shrink-0 border-b-4 border-[#2f7fe8] bg-[#ece9d8] pt-[2px]">
      <div className="flex gap-[2px] border-t border-[#aca899] pt-[2px] pr-[3px]">
        <div className={`${cell} flex-1`} />
        <div className={`${cell} w-[22px] justify-center`}>
          <PersonIcon />
        </div>
        <div className={`${cell} w-[22px] justify-center`}>
          <MailIcon />
        </div>
        <div className={`${cell} w-[22px] justify-center`}>
          <GlobeIcon />
        </div>
        <div className={`${cell} w-[22px] justify-center`}>
          <LockIcon />
        </div>
        <div className={`${cell} w-[90px] pl-1`}>Conectado</div>
        <div className={`${cell} w-[125px] pl-1`}>Spanish</div>
      </div>
    </footer>
  );
}

export default function App() {
  return (
    <div className="flex h-screen min-h-[560px] flex-col overflow-hidden bg-[#ece9d8] font-['DejaVu_Sans_Condensed','DejaVu_Sans',sans-serif] text-[11px] leading-[14px] text-black">
      <TitleBar />
      <MenuBar />
      <ToolBar />
      <div className="flex min-h-0 flex-1 border-t border-[#aca899]">
        <SideBar />
        <main className="flex min-w-0 flex-1 flex-col">
          <DocumentTabs />
          <div className="flex min-h-0 flex-1 flex-col border-r-[3px] border-b border-l border-[#8c9498] border-r-[#aca899]">
            <Chart />
          </div>
        </main>
      </div>
      <StatusBar />
    </div>
  );
}
